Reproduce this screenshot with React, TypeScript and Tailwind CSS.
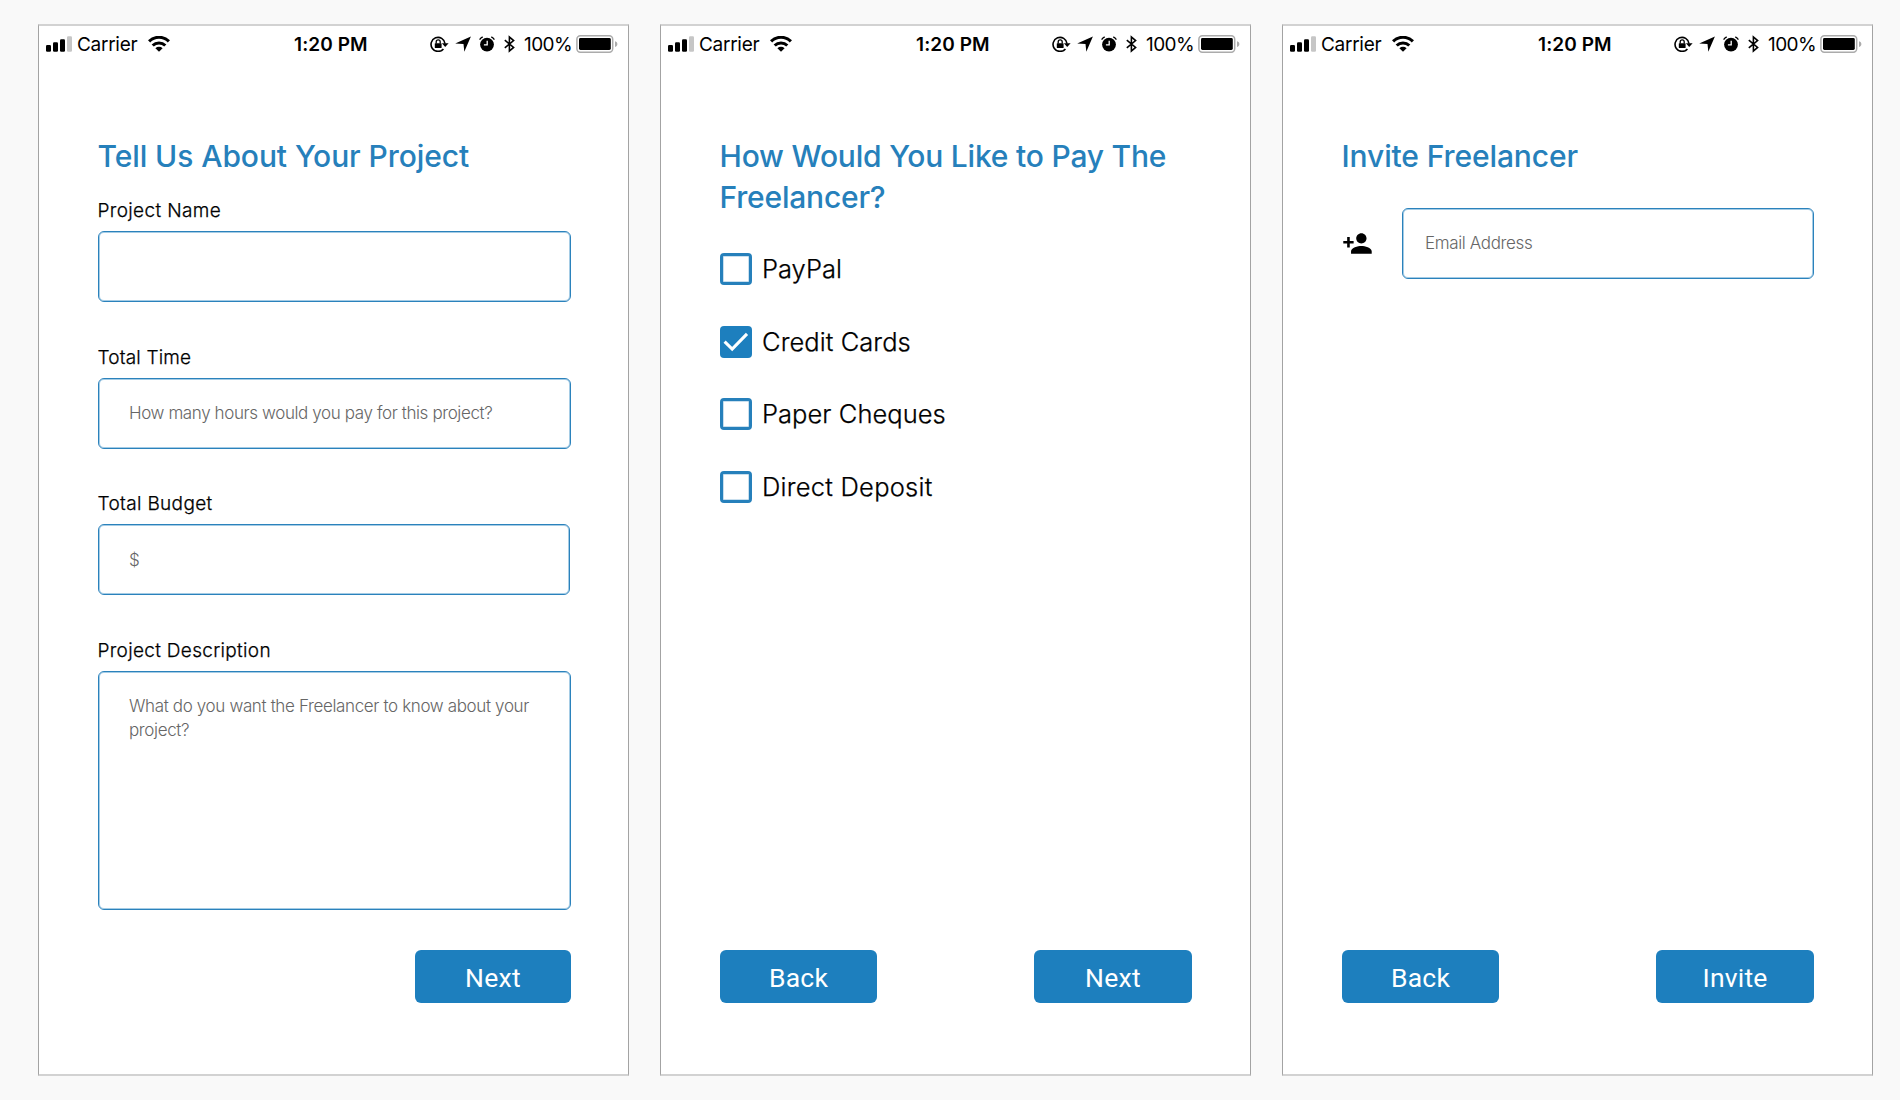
import React from "react";

function SignalBars() {
  return (
    <svg width="27" height="16" viewBox="0 0 27 16" className="shrink-0">
      <rect x="0" y="9" width="5" height="6.8" rx="1.2" />
      <rect x="7" y="6.3" width="5" height="9.5" rx="1.2" />
      <rect x="14" y="3.2" width="5" height="12.6" rx="1.2" />
      <rect x="21" y="0.2" width="5" height="15.6" rx="1.2" fill="#c6c6c6" />
    </svg>
  );
}

function Wifi() {
  return (
    <svg width="22" height="16" viewBox="0 0 22 16" className="shrink-0">
      <g fill="none" stroke="#000" strokeWidth="3.1">
        <path d="M1.1 5.4A14 14 0 0 1 20.9 5.4" />
        <path d="M4.7 9.5A9 9 0 0 1 17.3 9.5" />
      </g>
      <path d="M11 15.8 7.4 12.3A5.2 5.2 0 0 1 14.6 12.3Z" />
    </svg>
  );
}

function RotationLock() {
  return (
    <svg width="19" height="16" viewBox="0 0 19 16" className="shrink-0">
      <path d="M13.4 12.9A7 7 0 1 1 15 7.6" fill="none" stroke="#000" strokeWidth="1.6" />
      <path d="M11.9 7.2H18.6L15.2 11Z" />
      <rect x="4.8" y="7.2" width="6.8" height="4.8" rx="0.6" />
      <path d="M6.2 7.4V5.8a2 2 0 0 1 4 0V7.4" fill="none" stroke="#000" strokeWidth="1.3" />
    </svg>
  );
}

function LocationArrow() {
  return (
    <svg width="16" height="16" viewBox="0 0 16 16" className="shrink-0">
      <path d="M15.9 0.4 0.2 7.6 8.5 8 9.3 15.8Z" />
    </svg>
  );
}

function Alarm() {
  return (
    <svg width="16" height="16" viewBox="0 0 16 16" className="shrink-0">
      <circle cx="8" cy="8.6" r="6.9" />
      <path d="M0.6 3.7A8.6 8.6 0 0 1 3.7 0.9M15.4 3.7A8.6 8.6 0 0 0 12.3 0.9" fill="none" stroke="#000" strokeWidth="1.3" />
      <path d="M8.2 4.8V8.8H4.9" fill="none" stroke="#fff" strokeWidth="1.3" />
    </svg>
  );
}

function Bluetooth() {
  return (
    <svg width="11" height="18" viewBox="0 0 11 18" className="shrink-0">
      <path d="M0.8 5.2 9.6 12.4 5.4 16V2L9.6 5.6 0.8 12.8" fill="none" stroke="#000" strokeWidth="1.6" />
    </svg>
  );
}

function Battery() {
  return (
    <svg width="43" height="18" viewBox="0 0 43 18" className="shrink-0">
      <rect x="0.9" y="0.8" width="35.8" height="16.4" rx="3.4" fill="none" stroke="#ababab" strokeWidth="1.5" />
      <rect x="3" y="3" width="31.8" height="12" rx="1.4" />
      <path d="M39 6.2C40.6 6.6 41.4 7.7 41.4 9.1S40.6 11.6 39 12Z" fill="#ababab" />
    </svg>
  );
}

function PersonAdd() {
  return (
    <svg width="31" height="31" viewBox="0 0 24 24" className="shrink-0">
      <path d="M15 12c2.21 0 4-1.79 4-4s-1.79-4-4-4-4 1.79-4 4 1.79 4 4 4zm-9-2V7H4v3H1v2h3v3h2v-3h3v-2H6zm9 4c-2.67 0-8 1.34-8 4v2h16v-2c0-2.66-5.33-4-8-4z" />
    </svg>
  );
}

function StatusBar() {
  return (
    <header className="grid h-9 shrink-0 grid-cols-[255px_136px_1fr] items-center text-[19px] leading-7">
      <div className="flex items-center pl-[7px]">
        <SignalBars />
        <span className="ml-1 w-[71px] pt-[2px] tracking-[-0.27px]">Carrier</span>
        <Wifi />
      </div>
      <span className="pt-px font-semibold tracking-[0.1px]">1:20 PM</span>
      <div className="flex items-center">
        <RotationLock />
        <span className="ml-1.5 flex"><LocationArrow /></span>
        <span className="ml-2 flex"><Alarm /></span>
        <span className="ml-[9px] flex"><Bluetooth /></span>
        <span className="ml-[9px] w-[52px] pt-[2px] tracking-[-0.6px]">100%</span>
        <Battery />
      </div>
    </header>
  );
}

function Screen({ children }: { children: React.ReactNode }) {
  return (
    <section className="flex h-[1052px] w-[591px] shrink-0 flex-col border-x border-y-2 border-x-[#a3a3a3] border-y-[#d2d2d2] bg-white">
      <StatusBar />
      <div className="flex grow flex-col pt-[74px] pb-[71px] pl-[59px]">{children}</div>
    </section>
  );
}

function Title({ className, children }: { className: string; children: React.ReactNode }) {
  return <h1 className={`-ml-[0.5px] text-[30px] leading-[41px] font-medium text-[#2680bb] ${className}`}>{children}</h1>;
}

function Label({ className, children }: { className: string; children: React.ReactNode }) {
  return (
    <span className={`-ml-[0.5px] text-[19px] leading-7 font-light [-webkit-text-stroke:0.25px_#000] ${className}`}>
      {children}
    </span>
  );
}

const fieldBox =
  "block rounded-md border border-[#2b82bc] text-[17px] font-light shadow-[inset_0_0_0_1px_#1d7fbe66] outline-none placeholder:text-[#666666] placeholder:opacity-100";

function ActionButton({ className, children }: { className: string; children: React.ReactNode }) {
  return (
    <button className={`h-[53px] rounded-md bg-[#1d7fbe] pt-[2px] font-[Roboto,sans-serif] text-[26.5px] leading-8 text-white ${className}`}>
      {children}
    </button>
  );
}

function CheckOption({ label, checked, className }: { label: string; checked?: boolean; className: string }) {
  return (
    <label className="flex h-8 items-center gap-[10px]">
      {checked ? (
        <span className="flex size-8 rounded-[4px] bg-[#1d7fbe]">
          <svg width="32" height="32" viewBox="0 0 32 32">
            <path d="M4.6 15.6 12.2 23 27 7.9" fill="none" stroke="#fff" strokeWidth="3.1" />
          </svg>
        </span>
      ) : (
        <span className="size-8 rounded-[4px] border-[3px] border-[#2680bb] shadow-[inset_0_0_0_1px_#2680bb40]" />
      )}
      <span className={`text-[25.5px] leading-8 font-light [-webkit-text-stroke:0.25px_#000] ${className}`}>{label}</span>
    </label>
  );
}

export default function App() {
  return (
    <main className="flex h-[1100px] w-[1900px] gap-[31px] overflow-hidden bg-[#f9f9f9] pt-6 pl-[38px] font-[Inter,sans-serif] text-black">
      <Screen>
        <Title className="tracking-[-0.08px]">Tell Us About Your Project</Title>
        <div className="mt-5 flex w-[473px] flex-col gap-[40.5px]">
          <div className="flex flex-col gap-1.5">
            <Label className="tracking-[0.36px]">Project Name</Label>
            <input className={`h-[71px] w-full px-[30px] ${fieldBox}`} />
          </div>
          <div className="flex flex-col gap-1.5 pt-px">
            <Label className="tracking-[0.18px]">Total Time</Label>
            <input
              className={`h-[71px] w-full px-[30px] tracking-[-0.39px] ${fieldBox}`}
              placeholder="How many hours would you pay for this project?"
            />
          </div>
          <div className="flex flex-col gap-1.5 pt-px">
            <Label className="tracking-[0.34px]">Total Budget</Label>
            <input className={`h-[71px] w-[472px] px-[30px] ${fieldBox}`} placeholder="$" />
          </div>
          <div className="flex flex-col gap-1.5 pt-px">
            <Label className="tracking-[0.32px]">Project Description</Label>
            <textarea
              className={`h-[239px] w-full resize-none px-[30px] pt-[22px] leading-6 tracking-[-0.36px] ${fieldBox}`}
              placeholder="What do you want the Freelancer to know about your project?"
            />
          </div>
        </div>
        <div className="mt-auto flex w-[473px] justify-end">
          <ActionButton className="w-[156px] tracking-[0.26px]">Next</ActionButton>
        </div>
      </Screen>

      <Screen>
        <Title className="tracking-[-0.2px]">
          How Would You Like to Pay The
          <br />
          Freelancer?
        </Title>
        <div className="mt-[35px] flex flex-col gap-[40.5px]">
          <CheckOption label="PayPal" className="tracking-normal" />
          <CheckOption label="Credit Cards" checked className="tracking-[0.07px]" />
          <CheckOption label="Paper Cheques" className="tracking-[0.05px]" />
          <CheckOption label="Direct Deposit" className="tracking-[0.24px]" />
        </div>
        <div className="mt-auto flex w-[472px] justify-between">
          <ActionButton className="w-[157px] tracking-[0.24px]">Back</ActionButton>
          <ActionButton className="w-[158px] tracking-[0.26px]">Next</ActionButton>
        </div>
      </Screen>

      <Screen>
        <Title className="tracking-[-0.12px]">Invite Freelancer</Title>
        <div className="mt-[31px] flex items-center gap-[29px]">
          <PersonAdd />
          <input className={`h-[71px] w-[412px] px-[22px] pb-px tracking-[-0.36px] ${fieldBox}`} placeholder="Email Address" />
        </div>
        <div className="mt-auto flex w-[472px] justify-between">
          <ActionButton className="w-[157px] tracking-[0.24px]">Back</ActionButton>
          <ActionButton className="w-[158px] tracking-[0.2px]">Invite</ActionButton>
        </div>
      </Screen>
    </main>
  );
}
